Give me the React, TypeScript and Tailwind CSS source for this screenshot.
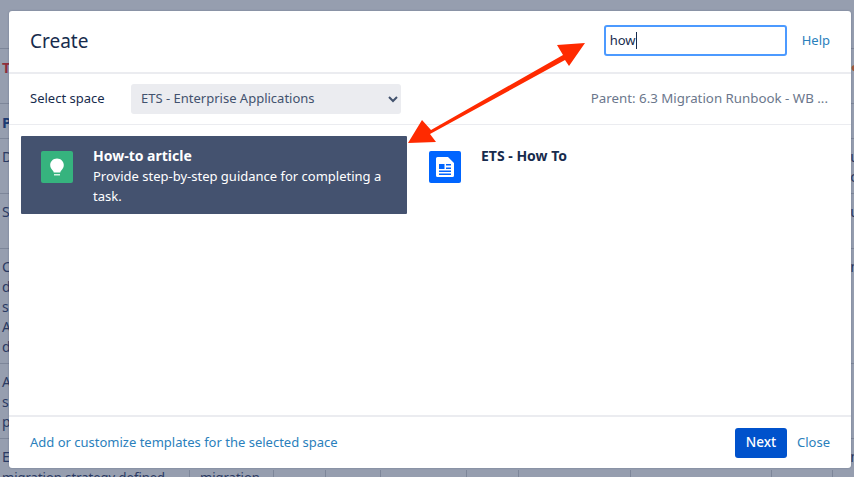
const font = { fontFamily: '"Noto Sans", sans-serif' };

function Bulb() {
  return (
    <svg width="32" height="32" viewBox="0 0 32 32" aria-hidden="true">
      <rect width="32" height="32" rx="2" fill="#36b37e" />
      <path d="M16 7.500c-3.900 0-6.800 2.900-6.800 6.600 0 2.400 1.100 4 2.500 5.300.7.700 1 1.300 1 2.100h6.600c0-.8.3-1.400 1-2.100 1.400-1.300 2.500-2.900 2.500-5.300 0-3.700-2.900-6.600-6.800-6.600z" fill="#fff" />
      <rect x="13" y="23" width="6" height="1.500" fill="#d5f2e4" />
    </svg>
  );
}

function Doc() {
  return (
    <svg width="32" height="32" viewBox="0 0 32 32" aria-hidden="true">
      <rect width="32" height="32" rx="2" fill="#0065ff" />
      <path d="M7 7.500a1.500 1.500 0 0 1 1.500-1.500h10.500l6 6v12.500a1.500 1.500 0 0 1-1.500 1.500h-15a1.500 1.500 0 0 1-1.500-1.500z" fill="#fff" />
      <rect x="10" y="13" width="5.500" height="5" fill="#0065ff" />
      <rect x="17" y="13" width="5" height="1.500" fill="#0065ff" />
      <rect x="17" y="16.500" width="5" height="1.500" fill="#0065ff" />
      <rect x="10" y="19.500" width="12" height="1.500" fill="#0065ff" />
      <rect x="10" y="22.500" width="12" height="1.500" fill="#0065ff" />
    </svg>
  );
}

function Row({ h, left, right }: { h: string; left?: React.ReactNode; right?: React.ReactNode }) {
  return (
    <div className={`${h} flex justify-between border-t border-[#7d8699] pl-[2px] pr-[0px] leading-[20px] overflow-hidden`}>
      <div className="pt-[8px]">{left}</div>
      <div className="pt-[8px] -mr-[5px]">{right}</div>
    </div>
  );
}

export default function App() {
  return (
    <div style={font} className="relative w-[854px] h-[477px] overflow-hidden bg-[#969eaf] text-[13px] text-[#172b4d]">
      {/* page behind the dialog */}
      <div className="flex flex-col pt-[48px] text-[14px] text-[#2b3a63]">
        <Row h="h-[55px]" left={<span className="font-bold text-[15px] text-[#8f2f3c]">T</span>} right={<span className="text-[#a0553f]">●</span>} />
        <Row h="h-[35px]" left={<span className="font-bold text-[15px] text-[#1d3a72]">P</span>} />
        <Row h="h-[55px]" left="D" right={<>u<br />c</>} />
        <Row h="h-[55px]" left="S" right="u" />
        <Row h="h-[115px]" left={<>C<br />d<br />s<br />A<br />d</>} right="n" />
        <Row h="h-[75px]" left={<>A<br />s<br />p</>} />
        <Row h="h-[39px]" left="E" right="n" />
      </div>
      <div className="absolute left-0 right-0 top-[470px] h-[7px] flex overflow-hidden leading-[15px] text-[13px] text-[#2b3a63]">
        <div className="w-[190px] pl-[2px] border-r border-[#7d8699] whitespace-nowrap">migration strategy defined</div>
        <div className="w-[84px] pl-[10px] border-r border-[#7d8699]">migration</div>
        <div className="w-[52px] border-r border-[#7d8699]" />
        <div className="w-[55px] border-r border-[#7d8699]" />
        <div className="w-[86px] border-r border-[#7d8699]" />
        <div className="w-[52px] border-r border-[#7d8699]" />
        <div className="w-[112px] border-r border-[#7d8699]" />
        <div className="w-[141px] border-r border-[#7d8699]" />
        <div className="w-[61px] border-r border-[#7d8699]" />
      </div>

      {/* dialog */}
      <div className="absolute left-[9px] top-[11px] w-[842px] h-[457px] flex flex-col bg-white rounded-[3px] shadow-[0_0_2px_rgba(9,30,66,0.3)]">
        <header className="h-[63px] shrink-0 flex items-center pl-[21px] pr-[21px] border-b-2 border-[#ebecf0]">
          <h1 className="text-[19px] leading-[24px] pb-[1px]">Create</h1>
          <div className="ml-auto w-[183px] h-[31px] mb-[2px] flex items-center pl-[4px] border-2 border-[#4c9aff] rounded-[3px] text-[13px]">
            <span>how</span>
            <span className="w-px h-[17px] bg-[#172b4d]" />
          </div>
          <a className="ml-[15px] pb-[2px] text-[#2a80bc]">Help</a>
        </header>
        <div className="h-[51px] shrink-0 flex items-center pl-[21px] pr-[23px] border-b border-[#ebecf0]">
          <label className="w-[101px]">Select space</label>
          <select
            defaultValue="ets"
            className="w-[270px] h-[30px] bg-[#ebecf0] rounded-[3px] pl-[6px] pr-[7px] pb-[2px] text-[#42526e] text-[13px] outline-none"
            style={font}
          >
            <option value="ets">ETS - Enterprise Applications</option>
          </select>
          <span className="ml-auto text-[13.300px] text-[#6b778c] whitespace-nowrap">Parent: 6.3 Migration Runbook - WB ...</span>
        </div>
        <main className="flex-1 flex items-start gap-[2px] pl-[12px] pt-[11px]">
          <div className="w-[386px] h-[78px] flex gap-[20px] pl-[20px] pt-[15px] bg-[#44526f] rounded-[1px] text-white">
            <div className="shrink-0 w-[32px] h-[32px]"><Bulb /></div>
            <div className="-mt-[5px] leading-[20px]">
              <div className="font-bold text-[14px]">How-to article</div>
              <div className="w-[296px]">Provide step-by-step guidance for completing a task.</div>
            </div>
          </div>
          <div className="flex gap-[20px] pl-[20px] pt-[15px]">
            <div className="shrink-0 w-[32px] h-[32px]"><Doc /></div>
            <div className="-mt-[5px] leading-[20px] font-bold text-[14px]">ETS - How To</div>
          </div>
        </main>
        <footer className="h-[53px] shrink-0 flex items-center pl-[21px] pr-[21px] border-t-2 border-[#ebecf0]">
          <a className="text-[#2a80bc]">Add or customize templates for the selected space</a>
          <button className="ml-auto w-[52px] h-[30px] rounded-[3px] bg-[#0052cc] text-white text-[13.500px] font-medium">Next</button>
          <a className="ml-[10px] text-[#2a80bc]">Close</a>
        </footer>
      </div>

      {/* annotation arrow */}
      <svg className="absolute left-0 top-0 pointer-events-none" width="854" height="477" viewBox="0 0 854 477" aria-hidden="true">
        <polygon fill="#ff2a00" points="585,43 557,45 563,55 431,130 422,120 408,143 436,142 430,134 565,60 569,66" />
      </svg>
    </div>
  );
}
